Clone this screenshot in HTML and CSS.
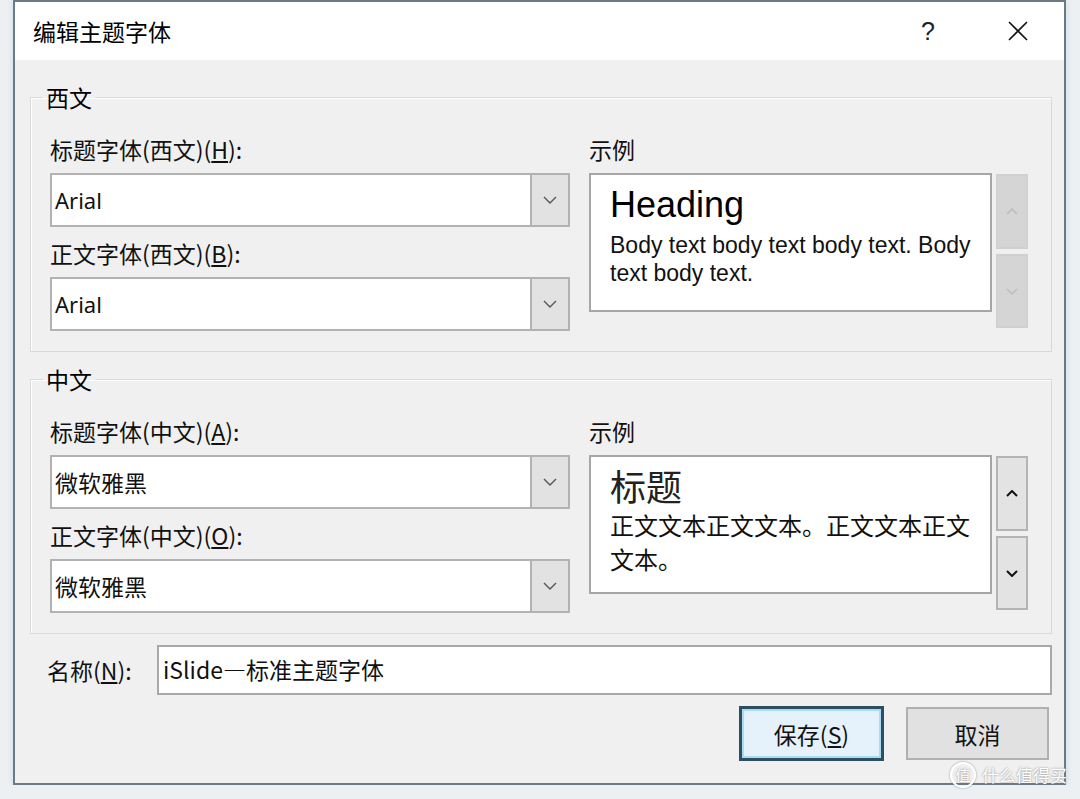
FILE: index.html
```html
<!DOCTYPE html>
<html lang="zh-CN">
<head>
	<meta charset="UTF-8">
	<title>编辑主题字体</title>
	<link rel="stylesheet" href="styles.css">
</head>
<body>
	<div class="window">
		<div class="titlebar">
			<span class="title">编辑主题字体</span>
			<span class="help">?</span>
			<span class="close">
				<svg width="22" height="22" viewBox="0 0 22 22"><path d="M2 2L20 20M20 2L2 20" stroke="#111" stroke-width="1.6" fill="none"/></svg>
			</span>
		</div>
		<div class="content">
			<fieldset class="group">
				<legend>西文</legend>
				<div class="group-body">
					<div class="fonts">
						<div class="field-label">标题字体(西文)(<u>H</u>):</div>
						<div class="combo">
							<span class="combo-text latin">Arial</span>
							<span class="combo-btn"><svg width="14" height="8" viewBox="0 0 14 8"><path d="M1 1L7 7L13 1" stroke="#555" stroke-width="1.4" fill="none"/></svg></span>
						</div>
						<div class="field-label">正文字体(西文)(<u>B</u>):</div>
						<div class="combo">
							<span class="combo-text latin">Arial</span>
							<span class="combo-btn"><svg width="14" height="8" viewBox="0 0 14 8"><path d="M1 1L7 7L13 1" stroke="#555" stroke-width="1.4" fill="none"/></svg></span>
						</div>
					</div>
					<div class="sample">
						<div class="field-label">示例</div>
						<div class="sample-row">
							<div class="preview preview-latin">
								<div class="preview-heading">Heading</div>
								<div class="preview-body">Body text body text body text. Body text body text.</div>
							</div>
							<div class="spin spin-off">
								<span class="spin-btn spin-up"><svg width="12" height="7" viewBox="0 0 12 7"><path d="M1 6L6 1L11 6" stroke="#bdbdbd" stroke-width="1.6" fill="none"/></svg></span>
								<span class="spin-btn spin-down"><svg width="12" height="7" viewBox="0 0 12 7"><path d="M1 1L6 6L11 1" stroke="#bdbdbd" stroke-width="1.6" fill="none"/></svg></span>
							</div>
						</div>
					</div>
				</div>
			</fieldset>

			<fieldset class="group group-cn">
				<legend>中文</legend>
				<div class="group-body">
					<div class="fonts">
						<div class="field-label">标题字体(中文)(<u>A</u>):</div>
						<div class="combo">
							<span class="combo-text">微软雅黑</span>
							<span class="combo-btn"><svg width="14" height="8" viewBox="0 0 14 8"><path d="M1 1L7 7L13 1" stroke="#555" stroke-width="1.4" fill="none"/></svg></span>
						</div>
						<div class="field-label">正文字体(中文)(<u>O</u>):</div>
						<div class="combo">
							<span class="combo-text">微软雅黑</span>
							<span class="combo-btn"><svg width="14" height="8" viewBox="0 0 14 8"><path d="M1 1L7 7L13 1" stroke="#555" stroke-width="1.4" fill="none"/></svg></span>
						</div>
					</div>
					<div class="sample">
						<div class="field-label">示例</div>
						<div class="sample-row">
							<div class="preview preview-cn">
								<div class="preview-heading">标题</div>
								<div class="preview-body">正文文本正文文本。正文文本正文文本。</div>
							</div>
							<div class="spin">
								<span class="spin-btn spin-up"><svg width="12" height="7" viewBox="0 0 12 7"><path d="M1 6L6 1L11 6" stroke="#111" stroke-width="2" fill="none"/></svg></span>
								<span class="spin-btn spin-down"><svg width="12" height="7" viewBox="0 0 12 7"><path d="M1 1L6 6L11 1" stroke="#111" stroke-width="2" fill="none"/></svg></span>
							</div>
						</div>
					</div>
				</div>
			</fieldset>

			<div class="name-row">
				<span class="name-label">名称(<u>N</u>):</span>
				<div class="name-input">iSlide—标准主题字体</div>
			</div>

			<div class="actions">
				<button class="btn btn-default">保存(<u>S</u>)</button>
				<button class="btn">取消</button>
			</div>
		</div>
	</div>

	<div class="watermark">
		<span class="wm-logo">值</span>
		<span class="wm-text">什么值得买</span>
	</div>
</body>
</html>
```

FILE: styles.css
```css
body{
	margin: 0;
	background: #edf0f2;
	font-family: "Noto Sans CJK SC", "Noto Sans", sans-serif;
	color: #000;
}
.window{
	box-sizing: border-box;
	width: 1053px;
	height: 785px;
	margin-left: 13px;
	border: 2px solid #6c7a85;
	background: #f0f0f0;
	box-shadow: 0 0 6px rgba(130, 180, 210, .35);
	display: flex;
	flex-direction: column;
}
.titlebar{
	height: 58px;
	flex: none;
	background: #fff;
	display: flex;
	align-items: center;
	padding-left: 18px;
}
.title{
	flex: 1;
	font-size: 23px;
	line-height: 30px;
}
.help{
	width: 46px;
	text-align: center;
	font-size: 25px;
	line-height: 30px;
	font-family: "Liberation Sans", sans-serif;
	color: #222;
	margin-right: 44px;
}
.close{
	width: 46px;
	margin-right: 23px;
	display: flex;
	justify-content: center;
}
.content{
	padding: 25px 12px 0 15px;
}

/* group boxes */
.group{
	margin: 0;
	min-width: 0;
	border: 1px solid #d9d9d9;
	box-shadow: inset 1px 1px 0 #fff;
	padding: 26px 23px 20px 19px;
}
.group-cn{
	margin-top: 15px;
}
.group legend{
	font-size: 23px;
	line-height: 24px;
	padding: 0 3px;
	margin-left: -7px;
}
.group-body{
	display: flex;
	gap: 19px;
}
.fonts{
	width: 520px;
}
.sample{
	flex: 1;
}
.field-label{
	font-size: 23px;
	line-height: 28px;
	margin-bottom: 10px;
	color: #111;
}
.combo + .field-label{
	margin-top: 12px;
}
.combo{
	box-sizing: border-box;
	height: 54px;
	border: 2px solid #b2b2b2;
	background: #fff;
	display: flex;
}
.combo-text{
	flex: 1;
	padding-left: 3px;
	font-size: 23px;
	line-height: 50px;
	color: #111;
}
.combo-text.latin{
	font-family: "Noto Sans", sans-serif;
	font-size: 22px;
}
.combo-btn{
	width: 36px;
	border-left: 2px solid #b2b2b2;
	background: #e2e2e2;
	display: flex;
	align-items: center;
	justify-content: center;
}

/* sample preview */
.sample-row{
	display: flex;
	align-items: flex-start;
}
.preview{
	box-sizing: border-box;
	width: 403px;
	height: 139px;
	border: 2px solid #a6a6a6;
	background: #fff;
	padding: 10px 12px 0 19px;
	overflow: hidden;
}
.preview-latin{
	font-family: "Liberation Sans", Arial, sans-serif;
}
.preview-latin .preview-heading{
	font-size: 36px;
	line-height: 40px;
	margin-bottom: 6px;
}
.preview-latin .preview-body{
	font-size: 23px;
	line-height: 28px;
	color: #111;
}
.preview-cn{
	padding-top: 6px;
}
.preview-cn .preview-heading{
	font-size: 36px;
	line-height: 45px;
	color: #222;
}
.preview-cn .preview-body{
	font-size: 24px;
	line-height: 34px;
	color: #111;
}
.spin{
	width: 32px;
	margin: 1px 0 0 4px;
	display: flex;
	flex-direction: column;
	gap: 5px;
}
.spin-btn{
	box-sizing: border-box;
	height: 75px;
	border: 2px solid #b4b4b4;
	background: #e3e3e3;
	display: flex;
	align-items: center;
	justify-content: center;
}
.spin-down{
	height: 74px;
}
.spin-off .spin-btn{
	border-color: #d0d0d0;
	background: #d5d5d5;
}

/* name + buttons */
.name-row{
	display: flex;
	align-items: center;
	margin-top: 11px;
	padding-left: 17px;
}
.name-label{
	width: 110px;
	font-size: 23px;
	line-height: 28px;
	color: #111;
}
.name-input{
	box-sizing: border-box;
	flex: 1;
	height: 50px;
	border: 2px solid #a9a9a9;
	background: #fff;
	padding-left: 4px;
	font-size: 23px;
	line-height: 44px;
	color: #111;
}
.actions{
	display: flex;
	justify-content: flex-end;
	gap: 22px;
	margin: 11px 3px 0 0;
}
.btn{
	box-sizing: border-box;
	width: 143px;
	height: 53px;
	margin-top: 1px;
	border: 2px solid #b0b0b0;
	background: #e1e1e1;
	font-family: "Noto Sans CJK SC", sans-serif;
	font-size: 23px;
	color: #111;
	padding: 0;
}
.btn-default{
	width: 145px;
	height: 55px;
	margin-top: 0;
	border: 3px solid #2c4f63;
	box-shadow: inset 0 0 0 2px #a9dcf3;
	background: #e5f1fb;
}

.watermark{
	position: absolute;
	left: 950px;
	top: 762px;
	display: flex;
	align-items: center;
	gap: 6px;
	color: #fff;
	text-shadow: 0 0 2px #7a7a7a;
}
.wm-logo{
	box-sizing: border-box;
	width: 26px;
	height: 26px;
	border-radius: 50%;
	border: 2px solid #fff;
	box-shadow: 0 0 2px #7a7a7a;
	font-size: 15px;
	line-height: 22px;
	text-align: center;
}
.wm-text{
	font-size: 17px;
	line-height: 22px;
}
```
